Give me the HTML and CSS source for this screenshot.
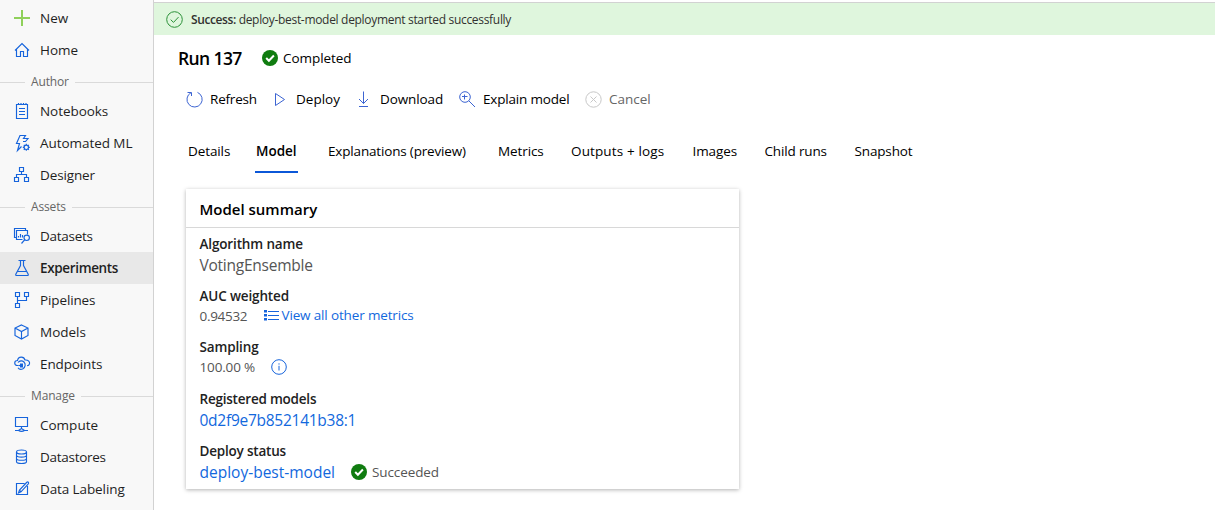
FILE: index.html
```html
<!DOCTYPE html>
<html lang="en">
<head>
<meta charset="utf-8">
<title>Run 137</title>
<link rel="stylesheet" href="styles.css">
</head>
<body>
<div class="app">
<nav class="sidebar">
  <a class="item"><svg class="icon" viewBox="0 0 16 16"><path class="plus" d="M8 0v16M0 8h16"/></svg><span class="t-new">New</span></a>
  <a class="item"><svg class="icon" viewBox="0 0 16 16"><path d="M1 8.500L8 1.600l7 6.900M2.500 7v7.500h4v-5h3v5h4V7"/></svg><span class="t-home">Home</span></a>
  <div class="group"><span class="t-author">Author</span></div>
  <a class="item"><svg class="icon" viewBox="0 0 16 16"><path d="M2.500 1.500h11v14h-11zM4.500 0v2M7 0v2M9.500 0v2M12 0v2M5 5.500h6M5 8.500h6M5 11.500h6"/></svg><span class="t-notebooks">Notebooks</span></a>
  <a class="item"><svg class="icon" viewBox="0 0 16 16"><path d="M9 6.500h2.500L14 3.500H9.500L11.500.5H6L2.500 8.500h3L3.500 15.500l4-4"/><circle cx="12.300" cy="12.300" r="2.200"/><path d="M12.300 8.800v1.300M12.300 14.500v1.300M8.800 12.300h1.300M14.500 12.300h1.300M9.800 9.800l1 1M13.800 13.800l1 1M14.800 9.800l-1 1M10.800 13.800l-1 1"/></svg><span class="t-automl">Automated ML</span></a>
  <a class="item"><svg class="icon" viewBox="0 0 16 16"><path d="M5.500.5h4v4h-4zM.5 10.500h4v4h-4zM10.500 10.500h4v4h-4zM7.500 4.500v3M2.500 10.500v-3h10v3"/></svg><span class="t-designer">Designer</span></a>
  <div class="group"><span class="t-assets">Assets</span></div>
  <a class="item"><svg class="icon" viewBox="0 0 16 16"><path d="M2 9.500H.5v-9h11V2M8.500 11.500h-6v-9h11v4M4.500 9.500V8M6.500 9.500V6M8.500 9.500V7"/><circle cx="12.700" cy="9.800" r="2.700"/><path d="M10.800 11.700L7.500 15.500"/></svg><span class="t-datasets">Datasets</span></a>
  <a class="item active"><svg class="icon" viewBox="0 0 16 16"><path d="M4.500.5h7M6.500.5v5L1.800 14.200q-.4 1.300.8 1.300h10.800q1.200 0 .8-1.300L9.500 5.500v-5M3.800 11.500h8.400"/></svg><span class="t-experiments">Experiments</span></a>
  <a class="item"><svg class="icon" viewBox="0 0 16 16"><path d="M1.500.5h4v4h-4zM10.500.5h4v4h-4zM1.500 11.500h4v4h-4zM3.500 4.500v7M3.500 8.500h9v-4"/></svg><span class="t-pipelines">Pipelines</span></a>
  <a class="item"><svg class="icon" viewBox="0 0 16 16"><path d="M7.500 1l6.500 3v7.500l-6.500 3.500L1 11.500V4zM1 4l6.500 3.500L14 4M7.500 7.500V15"/></svg><span class="t-models">Models</span></a>
  <a class="item"><svg class="icon" viewBox="0 0 16 16"><path d="M4.500 9.500h-1C-.2 9.500-.2 4.600 3.500 4.500 4.200 0 10 0 11 4c3.500-.3 5 2 4.500 3.800-.3 1.400-1.300 1.900-2.500 1.900M4 6.500C5.500 4.500 8.500 4.500 10 6c2 2 1.300 5.500-1 6.800-2 1-4 .5-5-1"/><path class="solid" d="M6 7.500h3v4H6z"/><path d="M4.500 9.500H7"/></svg><span class="t-endpoints">Endpoints</span></a>
  <div class="group"><span class="t-manage">Manage</span></div>
  <a class="item"><svg class="icon" viewBox="0 0 16 16"><path d="M1.500.5h12v9h-12zM7.500 9.500v2M1 13.500h3.500M10.500 13.500H14M4.500 13.500l3-2 3 2q-3 1.600-6 0z"/></svg><span class="t-compute">Compute</span></a>
  <a class="item"><svg class="icon" viewBox="0 0 16 16"><ellipse cx="7.500" cy="3" rx="5" ry="2"/><path d="M2.500 3v9.500c0 2.700 10 2.700 10 0V3M2.500 6.200c0 2.500 10 2.500 10 0M2.500 9.400c0 2.500 10 2.500 10 0"/></svg><span class="t-datastores">Datastores</span></a>
  <a class="item"><svg class="icon" viewBox="0 0 16 16"><path d="M10.500 2.500h-8v11h11v-8.500M4.500 12l1-3 7.300-7.700q1-.7 1.600.1.500.8-.1 1.500L7 10.800zM5.500 9l1.500 1.800"/></svg><span class="t-labeling">Data Labeling</span></a>
</nav>
<main class="main">
  <div class="banner"><svg class="banner-icon" viewBox="0 0 17 17"><circle cx="8.500" cy="8.500" r="7.800"/><path d="M4.700 8.700l2.800 2.700 5-5.300"/></svg><p class="banner-text"><b>Success:</b> <span>deploy-best-model deployment started successfully</span></p></div>
  <header class="title">
    <h1>Run 137</h1>
    <svg class="check" viewBox="0 0 16 16"><circle cx="8" cy="8" r="8"/><path d="M4.200 8l2.700 2.700 5-5.200"/></svg>
    <span class="t-completed">Completed</span>
  </header>
  <div class="commands">
    <a class="cmd c-refresh"><svg viewBox="0 0 17 17"><path d="M11.500 1.400A7.600 7.600 0 1 1 5 1.700M1.500 1.500H5.500V5"/></svg><span>Refresh</span></a>
    <a class="cmd c-deploy"><svg viewBox="0 0 17 17"><path d="M1.500 2.500v12l9-6z"/></svg><span>Deploy</span></a>
    <a class="cmd c-download"><svg viewBox="0 0 17 17"><path d="M5.500.5v12M1 8l4.500 4.500L10 8M1 15.500h9"/></svg><span>Download</span></a>
    <a class="cmd c-explain"><svg viewBox="0 0 17 17"><circle cx="6" cy="6" r="5.300"/><path d="M9.800 9.800L16 16"/><path d="M5.500 3.500v5M3 5.500h5.500"/></svg><span>Explain model</span></a>
    <a class="cmd c-cancel"><svg viewBox="0 0 17 17"><circle cx="8.500" cy="8.500" r="7.700"/><path d="M5.500 5.500l6 6M11.500 5.500l-6 6"/></svg><span>Cancel</span></a>
  </div>
  <div class="tabs">
    <a class="tab tab-details">Details</a>
    <a class="tab tab-model selected">Model</a>
    <a class="tab tab-explanations">Explanations (preview)</a>
    <a class="tab tab-metrics">Metrics</a>
    <a class="tab tab-outputs">Outputs + logs</a>
    <a class="tab tab-images">Images</a>
    <a class="tab tab-child">Child runs</a>
    <a class="tab tab-snapshot">Snapshot</a>
  </div>
  <section class="card">
    <h2><span>Model summary</span></h2>
    <dl>
      <dt class="l-algorithm">Algorithm name</dt>
      <dd><span class="v-algorithm">VotingEnsemble</span></dd>
      <dt class="l-auc">AUC weighted</dt>
      <dd class="row-auc"><span class="v-auc">0.94532</span><svg class="list" viewBox="0 0 15 11"><path class="dots" d="M0 0h3v2.500H0zM0 4h3v2.500H0zM0 8h3v2.500H0z"/><path d="M4 1.500h11M4 5.500h11M4 9.500h11"/></svg><a class="v-view">View all other metrics</a></dd>
      <dt class="l-sampling">Sampling</dt>
      <dd class="row-sampling"><span class="v-sampling">100.00 %</span><svg class="info" viewBox="0 0 16 16"><circle cx="8" cy="8" r="7.300"/><path d="M8 6.800v4.700M8 4.300v1.300"/></svg></dd>
      <dt class="l-registered">Registered models</dt>
      <dd><a class="v-registered">0d2f9e7b852141b38:1</a></dd>
      <dt class="l-deploy">Deploy status</dt>
      <dd><a class="v-deploy">deploy-best-model</a><svg class="check" viewBox="0 0 16 16"><circle cx="8" cy="8" r="8"/><path d="M4.200 8l2.700 2.700 5-5.200"/></svg><span class="v-succeeded">Succeeded</span></dd>
    </dl>
  </section>
</main>
</div>
</body>
</html>
```
FILE: styles.css
```css
* { box-sizing: border-box; }
body { margin: 0; background: #fff; color: #000; font-family: "Open Sans", "Noto Sans", sans-serif; font-size: 13.5px; line-height: 20px; }
svg { fill: none; stroke: #1664dc; stroke-width: 1; flex: none; overflow: visible; }
.app { display: flex; height: 510px; overflow: hidden; }
.sidebar { width: 154px; flex: none; background: #f8f8f8; border-right: 1px solid #d2d2d2; padding-top: 2px; color: #1f1f1f; }
.item { display: flex; align-items: center; height: 32px; padding-left: 14px; gap: 10px; white-space: nowrap; }
.icon { width: 16px; height: 16px; stroke-width: 1.15; }
.plus { stroke: #8fd05a; stroke-width: 2; }
.icon .solid { fill: #1664dc; stroke: none; }
.t-notebooks, .t-automl { letter-spacing: -.06px; }
.t-designer, .t-pipelines, .t-endpoints { letter-spacing: -.12px; }
.t-datasets, .t-datastores { letter-spacing: -.28px; }
.t-experiments { letter-spacing: -.35px; }
.t-labeling { letter-spacing: -.1px; }
.active { background: #e8e8e8; font-weight: 600; }
.group { display: flex; align-items: center; height: 29px; padding-top: 3px; gap: 6px; font-size: 12px; letter-spacing: -.15px; color: #666; }
.group::before, .group::after { content: ""; height: 1px; background: #dadada; }
.group::before { width: 25px; }
.group::after { flex: 1; }
.main { flex: 1; min-width: 0; }
.banner { display: flex; align-items: center; height: 33px; margin-top: 2px; padding-left: 12px; gap: 8px; background: #dff6dd; border-top: 1px solid #d2d2d2; }
.banner-icon { width: 17px; height: 17px; stroke: #2b9138; }
.banner-text { margin: 0; padding-top: 1px; font-size: 12px; letter-spacing: -.31px; color: #323130; white-space: nowrap; }
.banner-text b { font-weight: 600; letter-spacing: -.4px; }
.title { display: flex; align-items: center; height: 46px; padding-left: 24px; }
.title h1 { margin: 0; width: 84px; font-size: 17.500px; font-weight: 600; letter-spacing: -.6px; white-space: nowrap; }
.check { width: 16px; height: 16px; stroke: #fff; stroke-width: 2; }
.check circle { fill: #107c10; stroke: none; }
.t-completed { margin-left: 5px; letter-spacing: -.05px; }
.commands { display: flex; height: 36px; padding-left: 32px; }
.cmd { display: flex; align-items: center; white-space: nowrap; gap: 7px; }
.cmd svg { width: 17px; height: 17px; stroke: #3c64d2; }
.c-refresh { width: 88px; letter-spacing: -.2px; }
.c-deploy { width: 84px; }
.c-deploy, .c-download { gap: 5px; }
.c-download { width: 101px; letter-spacing: -.1px; }
.c-explain { width: 126px; letter-spacing: -.18px; }
.c-cancel { color: #666; }
.c-cancel svg { stroke: #c8c8c8; }
.tabs { display: flex; height: 56px; padding: 17px 0 0 34px; }
.tab { height: 39px; padding-top: 7px; white-space: nowrap; }
.tab-details { width: 67px; letter-spacing: -.1px; }
.tab-model { width: 43px; margin-right: 30px; padding-left: 1px; }
.selected { font-weight: 600; border-bottom: 2px solid #0b57d8; }
.tab-explanations { width: 170px; letter-spacing: -.17px; }
.tab-metrics { width: 73px; letter-spacing: -.1px; }
.tab-outputs { width: 121.500px; letter-spacing: .13px; }
.tab-images { width: 72px; letter-spacing: -.1px; }
.tab-child { width: 90px; letter-spacing: -.15px; }
.tab-snapshot { letter-spacing: -.15px; }
.card { width: 553px; height: 300px; margin: 16px 0 0 32px; background: #fff; box-shadow: 0 1px 4px rgba(0,0,0,.3); }
.card h2 { margin: 0; height: 39px; padding: 10px 0 0 13.500px; border-bottom: 1px solid #d8d8d8; font-size: 15px; font-weight: 600; }
dl { margin: 0; padding: 6px 0 0 13.500px; }
dt { height: 20px; font-weight: 600; letter-spacing: -.14px; color: #222; }
.l-registered { letter-spacing: -.22px; }
.l-deploy { letter-spacing: -.2px; }
dd { display: flex; align-items: center; height: 22px; margin: 0 0 9.800px; color: #555; white-space: nowrap; }
dd a { color: #1268dd; }
.v-algorithm, .v-registered, .v-deploy { font-size: 15.500px; }
.v-algorithm { letter-spacing: -.25px; }
.v-registered { letter-spacing: -.26px; }
.row-auc, .row-sampling { height: 20px; margin-bottom: 11.600px; }
.v-auc { width: 64px; letter-spacing: -.3px; }
.list { width: 15px; height: 11px; margin-right: 3px; }
.list .dots { fill: #1664dc; stroke: none; }
.v-view { padding-bottom: 2px; letter-spacing: -.15px; }
.v-sampling { width: 71.500px; letter-spacing: -.15px; }
.info { width: 16px; height: 16px; }
.v-deploy { width: 151.500px; }
.v-succeeded { margin-left: 5px; letter-spacing: -.1px; }
```
